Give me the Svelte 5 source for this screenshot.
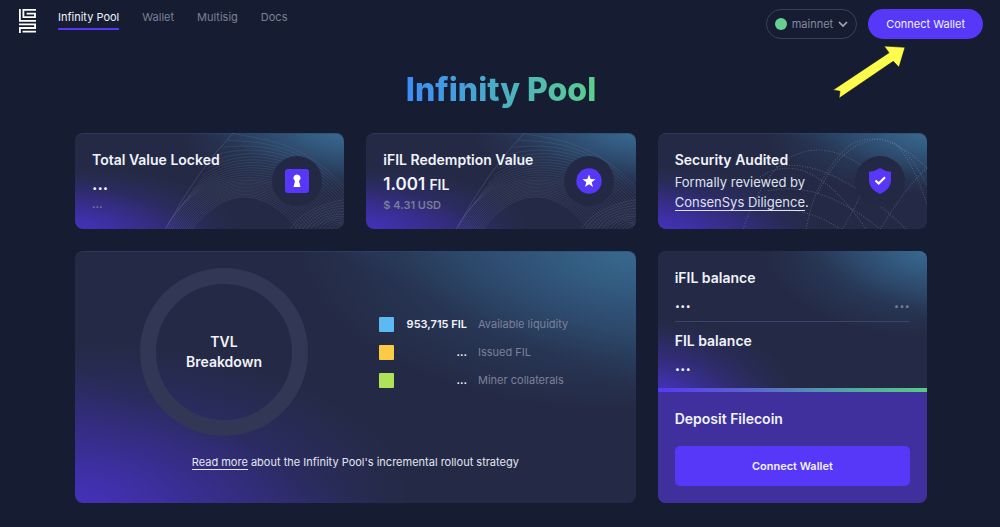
<script>
  const links = ['Infinity Pool', 'Wallet', 'Multisig', 'Docs'];
  const legend = [
    { color: '#5db9f3', value: '953,715 FIL', label: 'Available liquidity' },
    { color: '#fbcb46', value: '...', label: 'Issued FIL' },
    { color: '#aee358', value: '...', label: 'Miner collaterals' }
  ];

  // Family of arches running from the slanted left edge down to the right.
  const waves = Array.from({ length: 28 }, (_, i) => {
    const t = i / 27;
    const low = Math.min(1, t * 2);
    const high = Math.max(0, t * 2 - 1);
    const sx = 117 - 27 * low + 67 * high;
    const sy = 96 - 96 * high;
    return `M${sx} ${sy}C${sx + 33} ${53 - 45 * t} ${190 + 45 * t} ${53 - 48 * t} ${224 + 66 * t} ${98 - 20 * t}`;
  });
  const ripples = Array.from({ length: 14 }, (_, i) =>
    `M${214 + i * 4} 98Q${226 + i * 4} ${74 + i} 272 ${66 + i * 3}`
  );
  const globe = [
    'M85 96Q112 18 158 17Q184 17 206 35',
    'M102 44Q150 12 208 96',
    'M118 34Q170 22 248 96',
    'M110 58Q160 46 222 96',
    'M110 76Q150 74 182 96',
    'M160 60Q185 6 224 6Q250 10 272 60',
    'M148 96Q158 40 192 12Q226 -8 272 38',
    'M184 96Q206 60 214 30',
    'M222 96Q250 50 272 32',
    'M236 10Q256 28 272 82'
  ];
</script>

{#snippet waveArt()}
  <svg class="art" viewBox="0 0 269 96" preserveAspectRatio="xMaxYMin slice" aria-hidden="true">
    <path d="M90 96Q122 38 158 0" class="edge" />
    {#each waves as d}<path {d} />{/each}
    {#each ripples as d}<path {d} />{/each}
  </svg>
{/snippet}

<header>
  <svg class="logo" viewBox="0 0 17 24" width="17" height="24" role="img" aria-label="Glif">
    <path fill="none" stroke="#fff" stroke-width="1.8" d="M.9 0V11.9H17M4.4 9V.9H17M3.6 8.2H16V4.6H7.6M0 15.4H16.1V18.9M17 19H0.9V24M3.6 22.6H17" />
  </svg>
  <nav>
    {#each links as link, i}
      <a href="#top" class:active={i === 0}>{link}</a>
    {/each}
  </nav>
  <div class="actions">
    <button class="network">
      <span class="status"></span>mainnet
      <svg width="10" height="6" viewBox="0 0 10 6" aria-hidden="true"><path d="M1 1L5 5L9 1" fill="none" stroke="#a3a7b8" stroke-width="1.7" /></svg>
    </button>
    <button class="connect">Connect Wallet</button>
    <svg class="arrow" width="74" height="54" viewBox="0 0 74 54" aria-hidden="true">
      <path d="M73 2.3L52 1L57 7.7L1 45L8 46.3L7 53.3L61.3 16.3L67 22.3Z" fill="#fdfb4b" stroke="#111522" stroke-width=".6" />
    </svg>
  </div>
</header>

<main>
  <h1><span>Infinity Pool</span></h1>
  <div class="grid">
    <section class="card stat">
      {@render waveArt()}
      <div class="copy">
        <h2>Total Value Locked</h2>
        <p class="amount">...</p>
        <p class="usd">...</p>
      </div>
      <div class="badge">
        <svg width="24" height="24" viewBox="0 0 24 24" aria-hidden="true"><rect width="24" height="24" rx="3" fill="#5738f8" /><path d="M12 5.5a3.6 3.6 0 0 0-2 6.6L8.5 18h7L14 12.1a3.6 3.6 0 0 0-2-6.6Z" fill="#fff" /></svg>
      </div>
    </section>
    <section class="card stat">
      {@render waveArt()}
      <div class="copy">
        <h2>iFIL Redemption Value</h2>
        <p class="amount">1.001 <small>FIL</small></p>
        <p class="usd">$ 4.31 USD</p>
      </div>
      <div class="badge">
        <svg width="26" height="26" viewBox="0 0 26 26" aria-hidden="true"><circle cx="13" cy="13" r="12.7" fill="#5738f8" /><path d="M13 6.5L14.7 11L19.5 11.2L15.7 14.2L17 18.9L13 16.2L9 18.9L10.3 14.2L6.5 11.2L11.3 11Z" fill="#fff" /></svg>
      </div>
    </section>
    <section class="card stat">
      <svg class="art dots" viewBox="0 0 269 96" preserveAspectRatio="xMaxYMin slice" aria-hidden="true">
        {#each globe as d}<path {d} />{/each}
      </svg>
      <div class="copy">
        <h2>Security Audited</h2>
        <p class="review">Formally reviewed by<br /><a href="#audit">ConsenSys Diligence</a>.</p>
      </div>
      <div class="badge">
        <svg width="24" height="28" viewBox="0 0 24 28" aria-hidden="true"><path d="M12 1Q17 4.5 23 4.8V13Q23 22.5 12 27Q1 22.5 1 13V4.8Q7 4.5 12 1Z" fill="#5738f8" /><path d="M7.5 13.5L10.7 16.5L17 10.2" fill="none" stroke="#fff" stroke-width="2.2" /></svg>
      </div>
    </section>

    <section class="card breakdown">
      <div class="chart">
        <div class="ring"><h2>TVL<br />Breakdown</h2></div>
        <ul>
          {#each legend as item}
            <li>
              <span class="swatch" style="background: {item.color}"></span>
              <strong>{item.value}</strong>
              <span class="label">{item.label}</span>
            </li>
          {/each}
        </ul>
      </div>
      <p class="more"><a href="#rollout">Read more</a> about the Infinity Pool's incremental rollout strategy</p>
    </section>

    <section class="card wallet">
      <div class="balances">
        <h2>iFIL balance</h2>
        <p class="amount split"><span>...</span><span class="dim">...</span></p>
        <hr />
        <h2>FIL balance</h2>
        <p class="amount">...</p>
      </div>
      <div class="deposit">
        <h2>Deposit Filecoin</h2>
        <button>Connect Wallet</button>
      </div>
    </section>
  </div>
</main>

<style>
  :global(body) {
    background: #161d32;
    color: #f1f3fb;
    font-family: Inter, sans-serif;
  }
  h1, h2, p, ul { margin: 0; padding: 0; }
  button { font-family: inherit; border: 0; cursor: pointer; }
  a { color: inherit; text-decoration: none; }

  header {
    display: flex;
    align-items: flex-start;
    padding: 9px 17px 0 19px;
    height: 44px;
  }
  nav { display: flex; gap: 23px; margin-left: 22px; }
  nav a {
    font-size: 11px;
    line-height: 17px;
    padding-bottom: 2px;
    color: #7b8095;
    border-bottom: 2px solid transparent;
  }
  nav a.active { color: #f1f3fb; border-color: #5738f8; }
  .actions { position: relative; display: flex; gap: 11px; margin-left: auto; }
  .actions button { height: 30px; border-radius: 15px; font-size: 11px; }
  .actions .network {
    display: flex;
    align-items: center;
    gap: 5px;
    padding: 0 8px;
    border: 1px solid #3a4056;
    background: transparent;
    color: #858a9e;
  }
  .status { width: 12px; height: 12px; border-radius: 50%; background: #66cf92; }
  .connect { padding: 0 18px; background: #5738f8; color: #f1f3fb; }
  .arrow { position: absolute; right: 77px; top: 36px; }

  main { padding: 15px 73px 24px 75px; }
  h1 {
    text-align: center;
    font: 800 32px/44px Inter, sans-serif;
    margin-bottom: 21px;
  }
  h1 span {
    background: linear-gradient(90deg, #3c8cf8, #5bd08c);
    background-clip: text;
    color: transparent;
  }
  .grid { display: grid; grid-template-columns: repeat(3, 1fr); gap: 22px; }
  .card {
    position: relative;
    overflow: hidden;
    border-radius: 8px;
    box-shadow: inset 0 1px #2b4a6c88;
    background:
      radial-gradient(ellipse 60% 64% at 0% 100%, #4431b8 0%, #402fad99 35%, #3a2fa044 68%, #3a2fa000 100%),
      linear-gradient(to top right, #3f30a8aa 0%, #3a2f9a55 14%, #3a2f9a00 27%),
      radial-gradient(ellipse 60% 64% at 100% 0%, #38688f 0%, #34608799 35%, #2f547a44 68%, #2f547a00 100%),
      linear-gradient(to bottom left, #34608799 0%, #2f547a66 14%, #2f547a00 28%),
      #242a45;
  }
  h2 { font-size: 14px; line-height: 20px; font-weight: 600; }

  .stat {
    display: flex;
    justify-content: space-between;
    align-items: center;
    height: 96px;
    padding: 0 22px 0 17px;
    box-sizing: border-box;
  }
  .art { position: absolute; inset: 0; width: 100%; height: 100%; }
  .art path { fill: none; stroke: #8f98bc; stroke-opacity: .25; stroke-width: .6; }
  .art .edge { stroke-opacity: .4; }
  .dots path { stroke-width: 1; stroke-opacity: .4; stroke-dasharray: 1 1.6; }
  .copy { position: relative; align-self: flex-start; padding-top: 17px; }
  .amount { font-size: 17px; line-height: 28px; font-weight: 600; }
  .amount small { font-size: 14px; }
  .usd { font-size: 11px; line-height: 12px; font-weight: 600; color: #777d96; }
  .review { font-size: 13px; line-height: 20px; margin-top: 2px; color: #dfe2ee; }
  .review a, .more a { border-bottom: 1px solid currentColor; }
  .badge {
    position: relative;
    display: grid;
    place-items: center;
    width: 50px;
    height: 50px;
    border-radius: 50%;
    background: #232944;
  }

  .breakdown { grid-column: span 2; padding: 17px 65px 0; }
  .chart { display: flex; align-items: center; gap: 71px; }
  .ring {
    display: grid;
    place-items: center;
    text-align: center;
    width: 168px;
    height: 168px;
    box-sizing: border-box;
    border: 16px solid #323755;
    border-radius: 50%;
  }
  ul { list-style: none; }
  li {
    display: grid;
    grid-template-columns: 15px 62px auto;
    align-items: center;
    gap: 11px;
    height: 28px;
    font-size: 11px;
  }
  .swatch { width: 15px; height: 15px; border-radius: 1px; }
  li strong { text-align: right; font-weight: 600; white-space: nowrap; }
  .label { color: #7b819a; }
  .more { text-align: center; font-size: 11px; line-height: 16px; margin-top: 18px; color: #e3e6f2; }

  .wallet { display: flex; flex-direction: column; }
  .balances {
    flex: 1;
    padding: 17px 17px 13px;
    background:
      radial-gradient(ellipse 50% 50% at 0% 100%, #4a36d0aa 0%, #402fad55 50%, #3a2fa000 100%),
      radial-gradient(ellipse 60% 60% at 100% 0%, #38688f 0%, #34608799 35%, #2f547a44 68%, #2f547a00 100%),
      linear-gradient(to bottom left, #34608799 0%, #2f547a66 10%, #2f547a00 24%),
      linear-gradient(to top right, #3f30a8aa 0%, #3a2f9a55 10%, #3a2f9a00 24%),
      #242a45;
  }
  .split { display: flex; justify-content: space-between; }
  .dim { color: #777d96; }
  hr { border: 0; height: 1px; margin: 5px 0 9px; background: #3a4368; }
  .deposit { padding: 17px; background: #3f309d; position: relative; }
  .deposit::before {
    content: '';
    position: absolute;
    inset: -4px 0 auto;
    height: 4px;
    background: linear-gradient(90deg, #5738f8, #5a5ed0 30%, #50a5a5 70%, #55cb84);
  }
  .deposit button {
    display: block;
    width: 100%;
    height: 40px;
    margin-top: 17px;
    border-radius: 5px;
    background: #5738f8;
    color: #f1f3fb;
    font-size: 11px;
    font-weight: 600;
  }
</style>
